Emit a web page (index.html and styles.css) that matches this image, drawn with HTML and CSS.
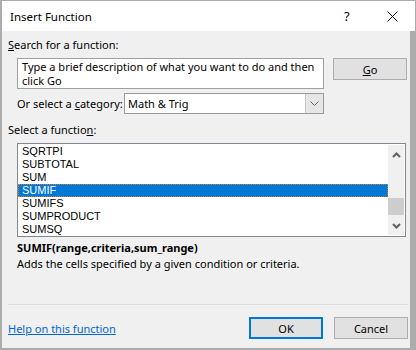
FILE: index.html
```html
<!DOCTYPE html>
<html lang="en">
<head>
  <meta charset="UTF-8" />
  <title>Insert Function</title>
  <link rel="stylesheet" href="styles.css">
</head>
<body>
  <div class="dialog">
    <div class="titlebar">
      <span class="title">Insert Function</span>
      <span class="title-help">?</span>
      <span class="title-close">
        <svg width="11" height="11" viewBox="0 0 11 11"><path d="M0.5 0.5 L10.5 10.5 M10.5 0.5 L0.5 10.5" stroke="#000" stroke-width="1" fill="none"/></svg>
      </span>
    </div>

    <div class="dialog-body">
      <div class="label"><u>S</u>earch for a function:</div>
      <div class="search-row">
        <div class="search-box">Type a brief description of what you want to do and then click Go</div>
        <button class="btn"><u>G</u>o</button>
      </div>

      <div class="category-row">
        <span class="category-label">Or select a <u>c</u>ategory:</span>
        <div class="select">
          <span class="select-value">Math &amp; Trig</span>
          <span class="select-arrow">
            <svg width="9" height="6" viewBox="0 0 9 6"><path d="M0.5 0.5 L4.5 4.5 L8.5 0.5" stroke="#606060" stroke-width="1" fill="none"/></svg>
          </span>
        </div>
      </div>

      <div class="label label-list">Select a functio<u>n</u>:</div>
      <div class="listbox">
        <ul class="list">
          <li>SQRTPI</li>
          <li>SUBTOTAL</li>
          <li>SUM</li>
          <li class="selected">SUMIF</li>
          <li>SUMIFS</li>
          <li>SUMPRODUCT</li>
          <li>SUMSQ</li>
        </ul>
        <div class="scrollbar">
          <span class="scroll-arrow">
            <svg width="9" height="6" viewBox="0 0 9 6"><path d="M1 5 L4.5 1.5 L8 5" stroke="#606060" stroke-width="2" fill="none"/></svg>
          </span>
          <div class="scroll-track"><div class="scroll-thumb"></div></div>
          <span class="scroll-arrow">
            <svg width="9" height="6" viewBox="0 0 9 6"><path d="M1 1 L4.5 4.5 L8 1" stroke="#606060" stroke-width="2" fill="none"/></svg>
          </span>
        </div>
      </div>

      <div class="syntax">SUMIF(range,criteria,sum_range)</div>
      <div class="description">Adds the cells specified by a given condition or criteria.</div>

      <div class="footer">
        <a class="help-link" href="#">Help on this function</a>
        <div class="buttons">
          <button class="btn btn-default">OK</button>
          <button class="btn">Cancel</button>
        </div>
      </div>
    </div>
  </div>
</body>
</html>
```

FILE: styles.css
```css
body {
  margin: 0;
  padding: 0;
  font-family: 'Noto Sans', 'Open Sans', sans-serif;
  font-size: 11px;
  color: #000;
  background: #fff;
}

.dialog {
  width: 416px;
  height: 350px;
  box-sizing: border-box;
  border-top: 1px solid #acacac;
  border-left: 2px solid #acacac;
  border-right: 1px solid #acacac;
  border-bottom: 2px solid #acacac;
  display: flex;
  flex-direction: column;
  background: #f0f0f0;
}

.titlebar {
  height: 30px;
  background: #fff;
  display: flex;
  align-items: center;
  flex-shrink: 0;
}

.title {
  margin-left: 8px;
  flex: 1;
  font-size: 11.5px;
}

.title-help {
  width: 12px;
  margin-right: 31px;
  font-size: 13px;
}

.title-close {
  display: flex;
  margin-right: 17px;
}

.dialog-body {
  flex: 1;
  border-right: 5px solid #acacac;
  padding: 6px 2px 0 6px;
  display: flex;
  flex-direction: column;
}

.label {
  height: 16px;
  line-height: 16px;
}

.search-row {
  display: flex;
  gap: 9px;
  margin-top: 5px;
  margin-left: 9px;
  align-items: flex-start;
}

.search-box {
  width: 307px;
  height: 31px;
  box-sizing: border-box;
  background: #fff;
  border: 1px solid #a0a0a0;
  padding: 1px 0 0 4px;
  line-height: 14px;
}

.btn {
  width: 74px;
  height: 22px;
  box-sizing: border-box;
  background: #e1e1e1;
  border: 1px solid #adadad;
  font-family: 'Noto Sans', 'Open Sans', sans-serif;
  font-size: 11px;
  color: #000;
  padding: 0;
}

.btn-default {
  border: 2px solid #0078d7;
}

.category-row {
  display: flex;
  align-items: center;
  margin-top: 4px;
  margin-left: 9px;
}

.category-label {
  width: 107px;
  white-space: nowrap;
}

.select {
  width: 200px;
  height: 21px;
  box-sizing: border-box;
  border: 1px solid #999;
  background: #fff;
  display: flex;
}

.select-value {
  flex: 1;
  padding-left: 3px;
  line-height: 19px;
}

.select-arrow {
  width: 17px;
  background: #e6e6e6;
  border-left: 1px solid #c8c8c8;
  display: flex;
  align-items: center;
  justify-content: center;
}

.label-list {
  margin-top: 8px;
}

.listbox {
  margin-top: 5px;
  margin-left: 9px;
  width: 389px;
  height: 94px;
  box-sizing: border-box;
  border: 1px solid #828790;
  background: #fff;
  display: flex;
}

.list {
  list-style: none;
  margin: 0;
  padding: 1px 0 0 0;
  flex: 1;
  font-family: 'Liberation Sans', Arial, sans-serif;
}

.list li {
  height: 13px;
  line-height: 13px;
  padding-left: 4px;
}

.list li.selected {
  background: #0078d7;
  color: #fff;
  outline: 1px dotted #e07a1f;
  outline-offset: -1px;
}

.scrollbar {
  width: 16px;
  margin: 1px 1px 1px 0;
  background: #f0f0f0;
  display: flex;
  flex-direction: column;
}

.scroll-arrow {
  height: 19px;
  display: flex;
  align-items: center;
  justify-content: center;
}

.scroll-track {
  flex: 1;
  display: flex;
  flex-direction: column;
  justify-content: flex-end;
}

.scroll-thumb {
  height: 17px;
  background: #cdcdcd;
  margin-bottom: 1px;
}

.syntax {
  margin-top: 3px;
  margin-left: 9px;
  font-weight: bold;
  height: 16px;
  line-height: 16px;
}

.description {
  margin-left: 9px;
  height: 16px;
  line-height: 16px;
}

.footer {
  margin-top: 32px;
  border-top: 1px solid #dcdcdc;
  padding-top: 12px;
  display: flex;
  justify-content: space-between;
  align-items: center;
}

.help-link {
  color: #0066cc;
  text-decoration: underline;
}

.buttons {
  display: flex;
  gap: 11px;
}
```
